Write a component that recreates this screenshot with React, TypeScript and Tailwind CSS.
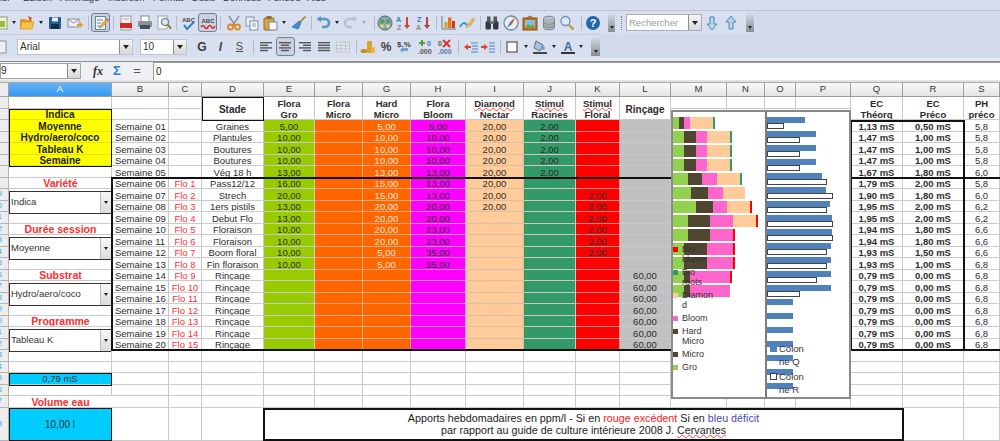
import type { ReactNode } from "react";

const fmt = (n: number) => (n ? n.toFixed(2).replace(".", ",") : "");

const stade = ["Graines","Plantules","Boutures","Boutures","Vég 18 h","Pass12/12","Strech","1ers pistils","Debut Flo","Floraison","Floraison","Boom floral","Fin floraison","Rinçage","Rinçage","Rinçage","Rinçage","Rinçage","Rinçage","Rinçage"];
const gro = [5,10,10,10,13,16,20,13,13,10,10,10,10,0,0,0,0,0,0,0];
const hard = [5,10,10,10,13,15,15,20,20,20,20,5,5,0,0,0,0,0,0,0];
const bloom = [5,10,10,10,13,13,13,20,20,23,23,35,35,0,0,0,0,0,0,0];
const diamond = [20,20,20,20,20,20,20,20,0,0,0,0,0,0,0,0,0,0,0,0];
const racines = [2,2,2,2,2,0,0,0,0,0,0,0,0,0,0,0,0,0,0,0];
const floral = [0,0,0,0,0,0,2,2,2,2,2,2,0,0,0,0,0,0,0,0];
const rincage = [0,0,0,0,0,0,0,0,0,0,0,0,0,60,60,60,60,60,60,60];
const ecQ = [1.13,1.47,1.47,1.47,1.67,1.79,1.9,1.95,1.95,1.94,1.94,1.93,1.93,0.79,0.79,0.79,0.79,0.79,0.79,0.79];
const ecR = [0.5,1,1,1,1.8,2,1.8,2,2,1.8,1.8,1.5,1,0,0,0,0,0,0,0];
const ph = ["5,8","5,8","5,8","5,8","6,0","5,8","6,0","6,2","6,2","6,6","6,6","6,6","6,8","6,8","6,8","6,8","6,8","6,8","6,8","6,8"];

const colLetters = ["A","B","C","D","E","F","G","H","I","J","K","L","M","N","O","P","Q","R","S"];
const yellow = ["Indica","Moyenne","Hydro/aero/coco","Tableau K","Semaine"];
const menus: [string, string][] = [["Fichier","w-[41px]"],["Edition","w-[37px]"],["Affichage","w-[48px]"],["Insertion","w-[45px]"],["Format","w-[38px]"],["Outils","w-[32px]"],["Données","w-[45px]"],["Fenêtre","w-[39px]"],["Aide","w-[30px]"]];

function Ico({ children }: { children: ReactNode }) {
  return <svg width="16" height="16" viewBox="0 0 16 16" className="shrink-0">{children}</svg>;
}

function Slot({ w, children }: { w: string; children?: ReactNode }) {
  return <div className={`${w} h-full flex items-center justify-center shrink-0`}>{children}</div>;
}

function Pressed({ children }: { children: ReactNode }) {
  return <div className="w-[19px] h-[19px] flex items-center justify-center rounded-[3px] border border-[#767d8c] bg-[#c9d1e3]">{children}</div>;
}

const Sep = () => <div className="w-px h-[14px] bg-[#b4bccd]" />;
const Dd = () => <div className="w-0 h-0 border-x-[2.5px] border-x-transparent border-t-[3px] border-t-[#222]" />;
const DdOff = () => <div className="w-0 h-0 border-x-[2.5px] border-x-transparent border-t-[3px] border-t-[#a5abb8]" />;

function Overflow({ w }: { w: string }) {
  return (
    <div className={`${w} h-[19px] shrink-0 flex items-end justify-center pb-[3px] bg-linear-to-b from-[#d5dbe8] to-[#8b8d92]`}>
      <Dd />
    </div>
  );
}

function ComboBtn() {
  return (
    <div className="w-[13px] h-full flex items-center justify-center border-l border-[#8d8d8d] bg-linear-to-b from-[#f4f4f4] to-[#d8d8d8] shrink-0">
      <div className="w-0 h-0 border-x-[3px] border-x-transparent border-t-[4px] border-t-[#222]" />
    </div>
  );
}

const Lines = ({ rows }: { rows: [number, number][] }) => (
  <Ico>
    {rows.map(([a, b], i) => (
      <rect key={i} x={a} y={3 + i * 2.6} width={b - a} height="1.4" fill="#555" />
    ))}
  </Ico>
);

function Toolbar1() {
  return (
    <div className="h-[24px] flex bg-[#d3daeb] border-t border-[#bcc5d6]">
      <div className="h-full flex items-center -ml-[7px] shrink-0 bg-[#d8dfee]" style={{ width: 623 }}>
        <Slot w="w-[18px]"><Ico><rect x="3" y="2" width="10" height="12" fill="#f1f1d8" stroke="#98a060" /><rect x="5" y="6" width="6" height="6" fill="#8fc13e" /></Ico></Slot>
        <Slot w="w-[6px]"><Dd /></Slot>
        <Slot w="w-[20px]"><Ico><path d="M1 4h5l1 1h6v9H1z" fill="#e29a24" /><path d="M3 7h12l-2 7H1z" fill="#f6c445" stroke="#c9831b" strokeWidth=".6" /><path d="M9 1l4 2-2 3z" fill="#d2402c" /></Ico></Slot>
        <Slot w="w-[8px]"><Dd /></Slot>
        <Slot w="w-[20px]"><Ico><rect x="2" y="2" width="12" height="12" rx="1" fill="#2c5d88" /><rect x="5" y="2.5" width="6" height="4" fill="#e8eef4" /><rect x="4" y="9" width="8" height="5" fill="#12314f" /></Ico></Slot>
        <Slot w="w-[20px]"><Ico><rect x="1" y="4" width="11" height="8" fill="#eceef2" stroke="#8b8f99" /><path d="M1 4l5.5 4L12 4" fill="none" stroke="#8b8f99" /><path d="M10 9h3V7l3 3-3 3v-2h-3z" fill="#e69a1e" /></Ico></Slot>
        <Slot w="w-[6px]"><Sep /></Slot>
        <Slot w="w-[19px]"><Pressed><Ico><rect x="2.5" y="1.5" width="10" height="13" fill="#f4f6fa" stroke="#5e87ad" /><path d="M4 5h6M4 8h4M4 11h3" stroke="#6b88a6" /><path d="M7 11l6-7 2 2-6 6-3 1z" fill="#e5b23b" stroke="#a8701c" strokeWidth=".5" /><path d="M13 4l1-1 2 2-1 1z" fill="#d94f3d" /></Ico></Pressed></Slot>
        <Slot w="w-[6px]"><Sep /></Slot>
        <Slot w="w-[19px]"><Ico><rect x="3" y="1" width="10" height="14" fill="#f2f2f2" stroke="#999" /><rect x="2" y="8" width="12" height="5" fill="#d52b1e" /><path d="M5 4h6" stroke="#aaa" /></Ico></Slot>
        <Slot w="w-[19px]"><Ico><rect x="4" y="1" width="8" height="6" fill="#fff" stroke="#888" /><rect x="1" y="6" width="14" height="6" rx="1" fill="#8a929c" /><rect x="3" y="10" width="10" height="4" fill="#4a4f57" /><rect x="10" y="8" width="3" height="1" fill="#3bb273" /></Ico></Slot>
        <Slot w="w-[19px]"><Ico><rect x="2" y="1" width="9" height="13" fill="#fbfbfb" stroke="#9aa" /><circle cx="9" cy="7" r="3.5" fill="#d5e7f5" stroke="#6e7e8d" strokeWidth="1.2" /><path d="M11.5 9.5l3.5 4" stroke="#a7792e" strokeWidth="2" /></Ico></Slot>
        <Slot w="w-[6px]"><Sep /></Slot>
        <Slot w="w-[19px]"><Ico><text x="1" y="7" fontSize="6" fontWeight="700" fill="#444" fontFamily="Liberation Sans">ABC</text><path d="M3 10l3 4 7-7" fill="none" stroke="#2f7fc1" strokeWidth="2" /></Ico></Slot>
        <Slot w="w-[19px]"><Pressed><Ico><text x="1.5" y="8" fontSize="6" fontWeight="700" fill="#444" fontFamily="Liberation Sans">ABC</text><path d="M1 12q2-3 3.5 0t3.5 0 3.5 0 3.5-1" fill="none" stroke="#d52b1e" strokeWidth="1.6" /></Ico></Pressed></Slot>
        <Slot w="w-[7px]"><Sep /></Slot>
        <Slot w="w-[19px]"><Ico><path d="M3 1l6 9M13 1L7 10" stroke="#8b8f96" strokeWidth="1.4" /><circle cx="4.5" cy="12" r="2.5" fill="none" stroke="#e08a22" strokeWidth="1.8" /><circle cx="11.5" cy="12" r="2.5" fill="none" stroke="#e08a22" strokeWidth="1.8" /></Ico></Slot>
        <Slot w="w-[18px]"><Ico><rect x="2" y="2" width="8" height="9" fill="#e8edf2" stroke="#8f9aa6" /><rect x="6" y="6" width="8" height="9" fill="#f4f7fa" stroke="#7e8fa0" /><path d="M8 9h4M8 11h4" stroke="#8da0b2" /></Ico></Slot>
        <Slot w="w-[18px]"><Ico><rect x="2" y="3" width="10" height="12" rx="1" fill="#d9a441" stroke="#9b6f1f" /><rect x="4.5" y="1" width="5" height="3" fill="#8b6a32" /><rect x="7" y="7" width="8" height="8" fill="#f5f7fa" stroke="#7c8a99" /></Ico></Slot>
        <Slot w="w-[10px]"><Dd /></Slot>
        <Slot w="w-[19px]"><Ico><path d="M14 1l1 1-6 6-1-1z" fill="#a66f28" /><path d="M8 6l2 2-3 6-6-2z" fill="#3f8fd2" stroke="#1f5f98" strokeWidth=".6" /></Ico></Slot>
        <Slot w="w-[6px]"><Sep /></Slot>
        <Slot w="w-[18px]"><Ico><path d="M3 4h7a4 4 0 0 1 0 8H7" fill="none" stroke="#5a93c4" strokeWidth="2.6" /><path d="M6 1v6L1.5 4z" fill="#5a93c4" /></Ico></Slot>
        <Slot w="w-[10px]"><Dd /></Slot>
        <Slot w="w-[17px]"><Ico><path d="M13 4H6a4 4 0 0 0 0 8h3" fill="none" stroke="#bcc3cf" strokeWidth="2.6" /><path d="M10 1v6l4.5-3z" fill="#bcc3cf" /></Ico></Slot>
        <Slot w="w-[10px]"><DdOff /></Slot>
        <Slot w="w-[10px]"><Sep /></Slot>
        <Slot w="w-[12px]"><Ico><circle cx="8" cy="8" r="7" fill="#8ba6b8" stroke="#4d6a74" /><circle cx="5" cy="6.5" r="2.2" fill="#5f9a52" /><circle cx="11" cy="6.5" r="2.2" fill="#5f9a52" /><circle cx="5" cy="11" r="2" fill="#d0d67a" /><circle cx="11" cy="11" r="2" fill="#d0d67a" /></Ico></Slot>
        <Slot w="w-[26px]"><Ico><text x="0" y="7" fontSize="7" fontWeight="700" fill="#2f7fc1" fontFamily="Liberation Sans">A</text><text x="1" y="15" fontSize="7" fontWeight="700" fill="#888" fontFamily="Liberation Sans">Z</text><path d="M11 2v9" stroke="#d8432e" strokeWidth="2" /><path d="M8 10h6l-3 4z" fill="#d8432e" /></Ico></Slot>
        <Slot w="w-[14px]"><Ico><text x="1" y="7" fontSize="7" fontWeight="700" fill="#2f7fc1" fontFamily="Liberation Sans">Z</text><text x="0" y="15" fontSize="7" fontWeight="700" fill="#888" fontFamily="Liberation Sans">A</text><path d="M11 2v9" stroke="#a9473a" strokeWidth="2" /><path d="M8 10h6l-3 4z" fill="#a9473a" /></Ico></Slot>
        <Slot w="w-[10px]"><Sep /></Slot>
        <Slot w="w-[16px]"><Ico><path d="M1 1v13h14" fill="none" stroke="#6b7a8c" /><rect x="3.5" y="7" width="3" height="6" fill="#d6a11d" /><rect x="7" y="2.5" width="3.5" height="10.5" fill="#e8761c" /><rect x="11" y="6" width="3" height="7" fill="#cf3a20" /></Ico></Slot>
        <Slot w="w-[20px]"><Ico><path d="M1 12q3-6 6-3t6-2" fill="none" stroke="#3f8fd2" strokeWidth="1.8" /><path d="M8 10l6-7 2 1.5-6 7-3 1z" fill="#f2c14e" stroke="#b8862a" strokeWidth=".5" /></Ico></Slot>
        <Slot w="w-[6px]"><Sep /></Slot>
        <Slot w="w-[18px]"><Ico><rect x="1.5" y="6" width="5.5" height="8.5" rx="1.5" fill="#333a3f" /><rect x="9" y="6" width="5.5" height="8.5" rx="1.5" fill="#333a3f" /><rect x="3" y="1.5" width="3.5" height="6" fill="#555" /><rect x="9.5" y="1.5" width="3.5" height="6" fill="#555" /><rect x="6" y="6" width="4" height="3" fill="#6d7378" /></Ico></Slot>
        <Slot w="w-[20px]"><Ico><circle cx="8" cy="8" r="7" fill="#e8edf2" stroke="#7c8894" strokeWidth="1.3" /><path d="M12 3L9 9 7 7z" fill="#d9442e" /><path d="M4 13l3-6 2 2z" fill="#2f7fc1" /></Ico></Slot>
        <Slot w="w-[18px]"><Ico><rect x="1" y="3" width="14" height="12" fill="#c4731d" stroke="#8d5013" /><path d="M5 3l3-2 3 2" fill="none" stroke="#8d5013" /><rect x="3" y="5" width="10" height="8" fill="#7fc0e8" /><path d="M3 13l3-4 3 2 2-2 2 4z" fill="#6fa53c" /></Ico></Slot>
        <Slot w="w-[20px]"><Ico><ellipse cx="8" cy="3.5" rx="5.5" ry="2.3" fill="#c3c8cc" stroke="#7d8388" /><path d="M2.5 3.5v9c0 3 11 3 11 0v-9" fill="#aeb4b9" stroke="#7d8388" /><path d="M2.5 7c0 3 11 3 11 0M2.5 10c0 3 11 3 11 0" fill="none" stroke="#7d8388" /></Ico></Slot>
        <Slot w="w-[16px]"><Ico><circle cx="6.5" cy="6" r="4.5" fill="#dbeaf6" stroke="#6f91ad" strokeWidth="1.3" /><path d="M10 10l4.5 4.5" stroke="#c4922f" strokeWidth="2.2" /></Ico></Slot>
        <Slot w="w-[12px]"><Sep /></Slot>
        <Slot w="w-[12px]"><Ico><circle cx="8" cy="8" r="7" fill="#2364ad" /><text x="8" y="12" textAnchor="middle" fontSize="11" fontWeight="700" fill="#fff" fontFamily="Liberation Sans">?</text></Ico></Slot>
        <Slot w="w-[9px]" />
        <Overflow w="w-[7px]" />
      </div>
      <div className="w-[138px] h-full flex items-center bg-[#d8dfee] ml-px shrink-0">
        <div className="w-[9px] flex justify-center"><div className="w-px h-[14px] border-l border-dotted border-[#6f7788]" /></div>
        <div className="w-[76px] h-[17px] flex bg-white border border-[#a9aeb8]">
          <div className="flex-1 pl-[2px] text-[9.5px] leading-[15px] text-[#9a9a9a]">Rechercher</div>
          <ComboBtn />
        </div>
        <Slot w="w-[19px]"><Ico><path d="M6 2h4v7h3l-5 6-5-6h3z" fill="#b8d4ea" stroke="#4d86b4" /></Ico></Slot>
        <Slot w="w-[19px]"><Ico><path d="M6 14h4V7h3L8 1 3 7h3z" fill="#b8d4ea" stroke="#4d86b4" /></Ico></Slot>
        <Slot w="w-[6px]" />
        <Overflow w="w-[8px]" />
      </div>
    </div>
  );
}

function Toolbar2() {
  return (
    <div className="h-[24px] flex bg-[#d3daeb]">
      <div className="h-full flex items-center -ml-[7px] shrink-0 bg-[#d8dfee] border-t border-[#c4ccdc]" style={{ width: 607 }}>
        <Slot w="w-[18px]"><Ico><rect x="2" y="2" width="10" height="12" fill="#eef0f4" stroke="#8c939e" /></Ico></Slot>
        <Slot w="w-[6px]" />
        <div className="w-[116px] h-[16px] flex bg-white border border-[#bfc4cf] shrink-0">
          <div className="flex-1 pl-[2px] text-[10px] leading-[14px] text-[#333]">Arial</div>
          <ComboBtn />
        </div>
        <Slot w="w-[7px]" />
        <div className="w-[47px] h-[16px] flex bg-white border border-[#bfc4cf] shrink-0">
          <div className="flex-1 pl-[2px] text-[10px] leading-[14px] text-[#333]">10</div>
          <ComboBtn />
        </div>
        <Slot w="w-[6px]" />
        <Slot w="w-[18px]"><span className="text-[12px] font-bold text-[#3c3c3c]">G</span></Slot>
        <Slot w="w-[19px]"><span className="text-[12px] font-bold italic text-[#4a4a4a]">I</span></Slot>
        <Slot w="w-[19px]"><span className="text-[11px] underline text-[#4a4a4a]">S</span></Slot>
        <Slot w="w-[8px]"><Sep /></Slot>
        <Slot w="w-[18px]"><Lines rows={[[2,14],[2,10],[2,14],[2,10]]} /></Slot>
        <Slot w="w-[20px]"><Pressed><Lines rows={[[2,14],[4,12],[2,14],[4,12]]} /></Pressed></Slot>
        <Slot w="w-[19px]"><Lines rows={[[2,14],[6,14],[2,14],[6,14]]} /></Slot>
        <Slot w="w-[19px]"><Lines rows={[[2,14],[2,14],[2,14],[2,14]]} /></Slot>
        <Slot w="w-[20px]"><Ico><rect x="1.5" y="3" width="13" height="10" fill="#e2e6ee" stroke="#c0c5cf" /><path d="M1.5 6.5h13M1.5 9.8h13M6 3v10M10.5 3v10" stroke="#c0c5cf" /></Ico></Slot>
        <Slot w="w-[6px]"><Sep /></Slot>
        <Slot w="w-[18px]"><Ico><rect x="7" y="2" width="5" height="12" rx="1" fill="#d9a12f" /><ellipse cx="4" cy="12" rx="3.5" ry="2" fill="#c98d22" /><rect x="11" y="8" width="4" height="6" fill="#e8b545" /></Ico></Slot>
        <Slot w="w-[18px]"><span className="text-[12px] font-bold text-[#444]">%</span></Slot>
        <Slot w="w-[20px]"><Ico><text x="0" y="8" fontSize="8" fontWeight="700" fill="#444" fontFamily="Liberation Sans">$.%</text><path d="M11 9H6V7.5L3 11l3 3v-2h5z" fill="#6ba6d6" /></Ico></Slot>
        <Slot w="w-[20px]"><Ico><path d="M5 1v6M2 4h6" stroke="#4fa23c" strokeWidth="2" /><text x="10" y="7" fontSize="7" fontWeight="700" fill="#2f7fc1" fontFamily="Liberation Sans">0</text><text x="1" y="15" fontSize="7" fontWeight="700" fill="#555" fontFamily="Liberation Sans">.000</text></Ico></Slot>
        <Slot w="w-[19px]"><Ico><text x="1" y="7" fontSize="7" fontWeight="700" fill="#555" fontFamily="Liberation Sans">0</text><path d="M6 1l7 7M13 1L6 8" stroke="#d8312a" strokeWidth="2" /><text x="1" y="15" fontSize="7" fontWeight="700" fill="#4d7db0" fontFamily="Liberation Sans">.000</text></Ico></Slot>
        <Slot w="w-[8px]"><Sep /></Slot>
        <Slot w="w-[17px]"><Ico><path d="M8 4h7M9 7h6M9 10h6M8 13h7" stroke="#4a87bd" /><path d="M1 8l4-3v2h3v2H5v2z" fill="#d8432e" /></Ico></Slot>
        <Slot w="w-[18px]"><Ico><path d="M9 4h6M9 7h6M9 10h6M9 13h6" stroke="#4a87bd" /><path d="M8 8L4 5v2H1v2h3v2z" fill="#d8432e" /></Ico></Slot>
        <Slot w="w-[6px]"><Sep /></Slot>
        <Slot w="w-[18px]"><Ico><rect x="3" y="3" width="10" height="10" fill="#fbfbfb" stroke="#555" strokeWidth="1.2" /></Ico></Slot>
        <Slot w="w-[10px]"><Dd /></Slot>
        <Slot w="w-[18px]"><Ico><path d="M4 2l7 4-3 6-6-3z" fill="#a9c4dc" stroke="#5b6d7d" /><circle cx="11" cy="9" r="2" fill="#5fa6d8" /><rect x="1" y="13" width="14" height="2" fill="#444" /></Ico></Slot>
        <Slot w="w-[10px]"><Dd /></Slot>
        <Slot w="w-[18px]"><Ico><text x="8" y="11.5" textAnchor="middle" fontSize="12" fontWeight="700" fill="#3d6d9c" fontFamily="Liberation Sans">A</text><rect x="1" y="13" width="14" height="2" fill="#333" /></Ico></Slot>
        <Slot w="w-[8px]"><Dd /></Slot>
        <Slot w="w-[6px]" />
        <Overflow w="w-[9px]" />
      </div>
    </div>
  );
}

function FormulaBar() {
  return (
    <div className="h-[18px] flex items-center bg-[#eef0f4] text-[10px] text-[#222]">
      <div className="w-[81px] h-[16px] flex bg-white border border-[#a3a3a3] shrink-0">
        <div className="flex-1 leading-[14px]">9</div>
        <ComboBtn />
      </div>
      <Slot w="w-[8px]" />
      <Slot w="w-[18px]"><span className="text-[12px] font-bold italic font-['Liberation_Serif',serif] text-[#333]">fx</span></Slot>
      <Slot w="w-[20px]"><span className="text-[13px] font-bold text-[#2f7fc1]">Σ</span></Slot>
      <Slot w="w-[20px]"><span className="text-[13px] text-[#555]">=</span></Slot>
      <div className="flex-1 h-full ml-[6px] bg-white border-l border-t border-[#9a9a9a] pl-[2px] leading-[17px]">0</div>
    </div>
  );
}

const cellBase = "border-r border-b border-[#c9c9c9] flex items-center justify-center overflow-hidden whitespace-nowrap leading-[11.5px] pt-[2.5px] text-[#2c2c2c]";

function Cell({ className = "", children }: { className?: string; children?: ReactNode }) {
  return <div className={`${cellBase} ${className}`}>{children}</div>;
}

function RowHead({ n }: { n: number }) {
  return (
    <div className="bg-[#ededed] border-r border-b border-[#b4b4b4] overflow-hidden flex items-center">
      {n >= 9 && <span className="-ml-[8px] w-[10px] shrink-0 text-right text-[8px] text-[#35a8ee]">{n % 10}</span>}
    </div>
  );
}

function Combo({ label }: { label: string }) {
  return (
    <div className="row-span-2 flex items-start">
      <div className="mt-[1.5px] w-[103px] h-[23.5px] flex bg-white border-[1.5px] border-[#333] shrink-0">
        <div className="flex-1 flex items-center pl-[1px] text-[9.5px] text-[#333]">{label}</div>
        <div className="w-[11px] flex items-center justify-center border-l border-[#bbb] bg-linear-to-b from-[#f6f6f6] to-[#dcdcdc]">
          <div className="w-0 h-0 border-x-[2.5px] border-x-transparent border-t-[3px] border-t-[#222]" />
        </div>
      </div>
    </div>
  );
}

const Label = ({ text }: { text: string }) => <Cell className="font-bold text-[10.5px] !text-[#ff2d2d] border-r-0">{text}</Cell>;

function ColA({ n }: { n: number }) {
  if (n >= 2 && n <= 6) return <Cell className="bg-[#ffff00] border-[#e4e400] font-bold text-[10px] !text-[#222]">{yellow[n - 2]}</Cell>;
  if (n === 8) return <Label text="Variété" />;
  if (n === 9) return <Combo label="Indica" />;
  if (n === 12) return <Label text="Durée session" />;
  if (n === 13) return <Combo label="Moyenne" />;
  if (n === 16) return <Label text="Substrat" />;
  if (n === 17) return <Combo label="Hydro/aero/coco" />;
  if (n === 20) return <Label text="Programme" />;
  if (n === 21) return <Combo label="Tableau K" />;
  if (n === 25) return <Cell className="bg-[#00ccff] !pt-[1px]">0,79 mS</Cell>;
  if (n === 27) return <Label text="Volume eau" />;
  if (n === 28) return <Cell className="bg-[#00ccff] text-[10px]">10,00 l</Cell>;
  if ([10, 14, 18, 22].includes(n)) return null;
  return <Cell />;
}

const wavy = "underline decoration-wavy decoration-[#ff3b3b] decoration-1 underline-offset-0";

function HeadCell({ a, b, wa, wb }: { a: string; b: string; wa?: boolean; wb?: boolean }) {
  return (
    <Cell className="row-span-2 flex-col font-bold text-[9.5px]">
      <span className={wa ? wavy : ""}>{a}</span>
      <span className={wb ? wavy : ""}>{b}</span>
    </Cell>
  );
}

function Sheet() {
  const rows: ReactNode[] = [];
  for (let n = 1; n <= 28; n++) {
    const w = n - 3;
    const isWeek = w >= 0 && w < 20;
    rows.push(<RowHead key={`h${n}`} n={n} />);
    rows.push(<ColA key={`a${n}`} n={n} />);
    if (n === 1 || n === 2) {
      rows.push(<Cell key={`b${n}`} />, <Cell key={`c${n}`} />);
      if (n === 1) {
        rows.push(
          <Cell key="d" className="row-span-2 font-bold text-[10px]">Stade</Cell>,
          <HeadCell key="e" a="Flora" b="Gro" wb />,
          <HeadCell key="f" a="Flora" b="Micro" />,
          <HeadCell key="g" a="Hard" b="Micro" />,
          <HeadCell key="h" a="Flora" b="Bloom" />,
          <HeadCell key="i" a="Diamond" b="Nectar" wa />,
          <HeadCell key="j" a="Stimul" b="Racines" wa />,
          <HeadCell key="k" a="Stimul" b="Floral" wa />,
          <Cell key="l" className="row-span-2 font-bold text-[10px]">Rinçage</Cell>,
        );
      }
      rows.push(<Cell key={`m${n}`} />, <Cell key={`n${n}`} />, <Cell key={`o${n}`} />, <Cell key={`p${n}`} />);
      if (n === 1) {
        rows.push(
          <HeadCell key="q" a="EC" b="Théorq" />,
          <HeadCell key="r" a="EC" b="Préco" />,
          <HeadCell key="s" a="PH" b="préco" />,
        );
      }
    } else if (isWeek) {
      const flo = w >= 5 ? `Flo ${w - 4}` : "";
      rows.push(
        <Cell key={`b${n}`} className="justify-start pl-[3px]">{`Semaine ${String(w + 1).padStart(2, "0")}`}</Cell>,
        <Cell key={`c${n}`} className="!text-[#ff3030]"><span className={flo ? wavy : ""}>{flo}</span></Cell>,
        <Cell key={`d${n}`}>{stade[w]}</Cell>,
        <Cell key={`e${n}`} className="bg-[#99cc00] border-[#b9c48f]">{fmt(gro[w])}</Cell>,
        <Cell key={`f${n}`} className="bg-[#ff6600] border-[#e8a67c]" />,
        <Cell key={`g${n}`} className="bg-[#ff6600] !text-[#ffe6d5] border-[#e8a67c]">{fmt(hard[w])}</Cell>,
        <Cell key={`h${n}`} className="bg-[#ff00ff] border-[#dc8edc]">{fmt(bloom[w])}</Cell>,
        <Cell key={`i${n}`} className="bg-[#ffcc99] border-[#d8c0a8]">{fmt(diamond[w])}</Cell>,
        <Cell key={`j${n}`} className="bg-[#339966] border-[#8aa898]">{fmt(racines[w])}</Cell>,
        <Cell key={`k${n}`} className="bg-[#ff0000] border-[#dd8a8a]">{fmt(floral[w])}</Cell>,
        <Cell key={`l${n}`} className="bg-[#c0c0c0] border-[#c0c0c0]">{fmt(rincage[w])}</Cell>,
        <Cell key={`m${n}`} />, <Cell key={`n${n}`} />, <Cell key={`o${n}`} />, <Cell key={`p${n}`} />,
        <Cell key={`q${n}`} className="font-bold">{`${fmt(ecQ[w])} mS`}</Cell>,
        <Cell key={`r${n}`} className="font-bold">{`${ecR[w].toFixed(2).replace(".", ",")} mS`}</Cell>,
        <Cell key={`s${n}`}>{ph[w]}</Cell>,
      );
    } else if (n === 28) {
      rows.push(
        <Cell key="b28" />, <Cell key="c28" />, <Cell key="d28" />,
        <div key="note" className="col-span-13 flex flex-col items-center justify-center text-[10.75px] leading-[12.5px] text-[#222]">
          <p>Apports hebdomadaires en ppm/l - Si en <span className="text-[#ff2020]">rouge excédent</span> Si en <span className="text-[#4a4ab0]">bleu déficit</span></p>
          <p>par rapport au guide de culture intérieure 2008 J. <span className={wavy}>Cervantes</span></p>
        </div>,
        <Cell key="r28" />, <Cell key="s28" />,
      );
    } else {
      colLetters.slice(1).forEach((c) => rows.push(<Cell key={`${c}${n}`} />));
    }
  }
  return (
    <div className="grid grid-cols-[9px_103px_57px_33px_62px_51px_48px_48px_55px_58px_52px_44px_51px_56px_38px_31px_55px_52px_61px_36px] grid-rows-[14px_repeat(27,11.5px)_33px] text-[9.5px]">
      <div className="bg-[#ececec] border-r border-b border-[#a5a5a5]" />
      {colLetters.map((c) => (
        <div key={c} className={`flex items-center justify-center border-r border-b border-[#9c9c9c] text-[9.5px] ${c === "A" ? "bg-linear-to-b from-[#5fb2f6] to-[#3b98ee] text-white" : "bg-linear-to-b from-[#f9f9f9] to-[#e3e3e3] text-[#333]"}`}>{c}</div>
      ))}
      {rows}
    </div>
  );
}

function LeftBars() {
  return (
    <div className="w-[92px] relative pt-[5px]">
      {gro.slice(0, 13).map((g, i) => {
        const parts: [number, string][] = [[g, "bg-[#92d050]"],[hard[i], "bg-[#4f4530]"],[bloom[i], "bg-[#ff66cc]"],[diamond[i], "bg-[#ffcc99]"],[racines[i], "bg-[#339966]"],[floral[i], "bg-[#ff0000]"]];
        return (
          <div key={i} className="h-[12px] mb-[2px] flex">
            {parts.map(([v, cls], k) => <div key={k} className={cls} style={{ width: v * 1.133 }} />)}
          </div>
        );
      })}
      <div className="absolute left-0 top-[132px] flex flex-col gap-[3px] text-[9px] leading-[10px] text-[#333]">
        {[["Bio bloom","bg-[#ff0000]"],["Bio roots","bg-[#339966]"],["Diamond","bg-[#ffcc99]"],["Bloom","bg-[#ff66cc]"],["Hard Micro","bg-[#4f4530]"],["Micro","bg-[#4f4530]"],["Gro","bg-[#92d050]"]].map(([t, c]) => (
          <div key={t} className="flex gap-[4px]">
            <div className={`w-[5px] h-[5px] mt-[2.5px] shrink-0 ${c}`} />
            <span className="w-[32px] [overflow-wrap:anywhere]">{t}</span>
          </div>
        ))}
      </div>
    </div>
  );
}

function RightBars() {
  return (
    <div className="flex-1 relative pt-[5px]">
      {ecQ.map((q, i) => (
        <div key={i} className="h-[12px] mb-[2px]">
          <div className="h-[6px] bg-[#4f81bd]" style={{ width: q * 33.2 }} />
          {ecR[i] > 0 && <div className="h-[6px] bg-white border border-[#444]" style={{ width: ecR[i] * 33.2 }} />}
        </div>
      ))}
      <div className="absolute left-[3px] top-[230px] flex flex-col gap-[2px] text-[9.5px] leading-[13px] text-[#333]">
        {[["Colonne Q","bg-[#4f81bd]"],["Colonne R","bg-white border border-[#444]"]].map(([t, c]) => (
          <div key={t} className="flex gap-[2px]">
            <div className={`w-[7px] h-[7px] mt-[3px] shrink-0 ${c}`} />
            <span className="w-[27px] [overflow-wrap:anywhere]">{t}</span>
          </div>
        ))}
      </div>
    </div>
  );
}

export default function App() {
  return (
    <div className="w-[1000px] h-[441px] overflow-hidden bg-white font-['Liberation_Sans',Arial,sans-serif]">
      <div className="h-[10px] overflow-hidden bg-[#d6ddee] flex -ml-[18px] text-[9.5px] leading-[12px] text-[#333]">
        {menus.map(([m, w]) => <span key={m} className={`${w} -mt-[8px] shrink-0`}>{m}</span>)}
      </div>
      <Toolbar1 />
      <Toolbar2 />
      <div className="h-[4px] bg-[#e6e9f0] border-b border-[#8e8e8e]" />
      <FormulaBar />
      <div className="h-[3px] bg-[#e2e2e2] border-b border-[#aaa]" />
      <div className="relative">
        <Sheet />
        <div className="absolute left-[111px] top-[94px] w-[900px] h-[174px] border-2 border-[#111]" />
        <div className="absolute left-[850px] top-[37px] w-[115px] h-[231px] border-2 border-[#111]" />
        <div className="absolute left-[9px] top-[25.5px] w-[103px] h-[58px] border-[1.5px] border-[#111]" />
        <div className="absolute left-[202px] top-[14px] w-[62px] h-[24px] border-[1.5px] border-[#111]" />
        <div className="absolute left-[9px] top-[290px] w-[103px] h-[12.5px] border-[1.5px] border-[#111]" />
        <div className="absolute left-[9px] top-[324.5px] w-[103px] h-[33px] border-[1.5px] border-[#111]" />
        <div className="absolute left-[263px] top-[324.5px] w-[641px] h-[33px] border-2 border-[#111]" />
        <div className="absolute left-[671px] top-[27px] w-[180px] h-[289px] flex bg-white border-2 border-[#8a8a8a]">
          <LeftBars />
          <div className="w-[2px] bg-[#7c7c7c]" />
          <RightBars />
        </div>
      </div>
    </div>
  );
}
